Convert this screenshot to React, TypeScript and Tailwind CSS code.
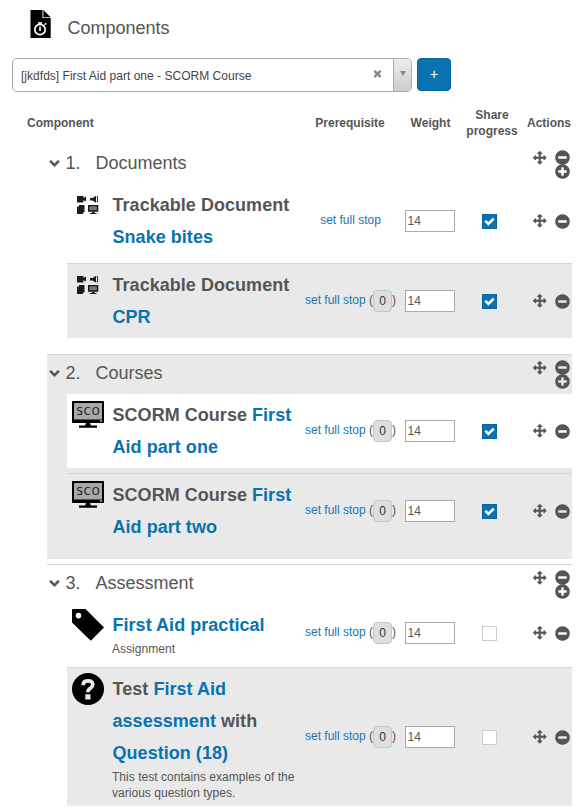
import React from "react";

const CIRCLE =
  "M1664 896q0 209-103 385.5t-279.5 279.5-385.5 103-385.5-103-279.5-279.5-103-385.5 103-385.5 279.5-279.5 385.5-103 385.5 103 279.5 279.5 103 385.5z";
const MINUS =
  "M1344 960v-128q0-26-19-45t-45-19h-768q-26 0-45 19t-19 45v128q0 26 19 45t45 19h768q26 0 45-19t19-45z";
const PLUS =
  "M1344 960v-128q0-26-19-45t-45-19h-256v-256q0-26-19-45t-45-19h-128q-26 0-45 19t-19 45v256h-256q-26 0-45 19t-19 45v128q0 26 19 45t45 19h256v256q0 26 19 45t45 19h128q26 0 45-19t19-45v-256h256q26 0 45-19t19-45z";
const ARROWS =
  "M1792 896q0 26-19 45l-256 256q-19 19-45 19t-45-19-19-45v-128h-384v384h128q26 0 45 19t19 45-19 45l-256 256q-19 19-45 19t-45-19l-256-256q-19-19-19-45t19-45 45-19h128v-384h-384v128q0 26-19 45t-45 19-45-19l-256-256q-19-19-19-45t19-45l256-256q19-19 45-19t45 19 19 45v128h384v-384h-128q-26 0-45-19t-19-45 19-45l256-256q19-19 45-19t45 19l256 256q19 19 19 45t-19 45-45 19h-128v384h384v-128q0-26 19-45t45-19 45 19l256 256q19 19 19 45z";
const CHEVRON =
  "M1683 808l-742 741q-19 19-45 19t-45-19l-742-741q-19-19-19-45.5t19-45.5l166-165q19-19 45-19t45 19l531 531 531-531q19-19 45-19t45 19l166 165q19 19 19 45.5t-19 45.5z";
const TIMES =
  "M1490 1322q0 40-28 68l-136 136q-28 28-68 28t-68-28l-294-294-294 294q-28 28-68 28t-68-28l-136-136q-28-28-28-68t28-68l294-294-294-294q-28-28-28-68t28-68l136-136q28-28 68-28t68 28l294 294 294-294q28-28 68-28t68 28l136 136q28 28 28 68t-28 68l-294 294 294 294q28 28 28 68z";
const CHECK =
  "M1671 566q0 40-28 68l-724 724-136 136q-28 28-68 28t-68-28l-136-136-362-362q-28-28-28-68t28-68l136-136q28-28 68-28t68 28l294 295 656-657q28-28 68-28t68 28l136 136q28 28 28 68z";

function Glyph({ d, className }: { d: string; className: string }) {
  return (
    <svg viewBox="0 0 1792 1792" className={`block shrink-0 overflow-visible fill-current stroke-current ${className}`}>
      <path fillRule="evenodd" d={d} />
    </svg>
  );
}

function MediaIcon() {
  return (
    <svg viewBox="0 0 32 32" className="block size-8">
      <g fill="#1c1c1c">
        <path d="M5 7h6.500v2L14 7.500v5L11.500 11v2.500H5z" />
        <path d="M18 9h2.500L24 6.800v6.900L20.500 11.500H18z" />
        <path d="M24.500 7.500h1v5.500h-1" fill="none" stroke="#1c1c1c" strokeWidth="0.900" />
        <path d="M7 16h5.500v7.500H11V25H5v-7.500h2z" />
        <path d="M16 16h10.300v6.800H16z" />
        <path d="M17.500 17.300h7.300v3.900h-7.300z" fill="#777" />
        <path d="M20 22.800h2.500V24h2v1h-6.500v-1h2z" />
      </g>
    </svg>
  );
}

function ScormIcon() {
  return (
    <svg viewBox="0 0 32 32" className="block size-8">
      <rect x="0" y="2" width="32" height="22" rx="0.800" fill="#000" />
      <rect x="2" y="4" width="28" height="16.500" fill="#a8a8a8" />
      <rect x="28" y="21.500" width="2" height="1" fill="#fff" />
      <path d="M14 24h4l.8 2.500H25v2.200H7v-2.200h6.200z" />
      <text x="16" y="16" textAnchor="middle" fontSize="10" fontFamily="DejaVu Sans" textLength="23" fill="#111">SCO</text>
    </svg>
  );
}

function TagIcon() {
  return (
    <svg viewBox="0 0 32 32" className="block size-8">
      <path fillRule="evenodd" d="M0 .5L.5 0H13.500L32 18.500 18.800 31.800 0 13.500zM6.500 3.800a2.800 2.800 0 100 5.600 2.800 2.800 0 000-5.600z" />
    </svg>
  );
}

function QuestionIcon() {
  return (
    <svg viewBox="0 0 32 32" className="block size-8">
      <circle cx="16" cy="16" r="16" />
      <path d="M11.300 12.300V11.200C11.300 8.500 13 7.800 16 7.800s4.800 1.200 4.800 3.900c0 3.800-5 3.300-5 7.500" fill="none" stroke="#e9e9e9" strokeWidth="3.700" />
      <rect x="13.300" y="21.300" width="5.200" height="5.200" fill="#e9e9e9" />
    </svg>
  );
}

function FileIcon() {
  return (
    <svg viewBox="0 0 21 28" className="block h-7 w-[21px]">
      <path d="M.5 0h12v8h8.200v20H.5z" />
      <path d="M13.400 0L20.700 7.200h-7.300z" />
      <g fill="none" stroke="#fff">
        <circle cx="10" cy="19.500" r="5.200" strokeWidth="1.700" />
        <path d="M8 13h4M10 13v2M10 16.500v4.500M14.600 14.800l1.500-1.500" strokeWidth="1.600" />
      </g>
    </svg>
  );
}

function Link({ children }: { children: React.ReactNode }) {
  return <a className="text-[#0873b0]">{children}</a>;
}

type RowProps = {
  icon: React.ReactNode;
  title: React.ReactNode;
  note?: string;
  stop?: boolean;
  checked?: boolean;
  shade?: string;
};

function Row({ icon, title, note, stop = true, checked = true, shade = "bg-white" }: RowProps) {
  return (
    <div className={`ml-5 flex items-center py-[5px] ${shade}`}>
      <div className="ml-[5px] w-8 self-start">{icon}</div>
      <div className="ml-2 w-[185px] shrink-0">
        <div className="pl-[0.5px] text-[18px] leading-8 font-bold tracking-[0.04px]">{title}</div>
        {note && <div className="text-[12px] leading-4 tracking-[0.03px]">{note}</div>}
      </div>
      <div className="flex w-[107px] shrink-0 items-center justify-center text-[12px] leading-4">
        <span className="mb-0.5 whitespace-pre text-[#1b75b0]">set full stop{stop ? " " : ""}</span>
        {stop && (
          <>
            <span className="mb-0.5">(</span>
            <span className="flex h-[22px] w-[19px] items-center justify-center rounded-[4px] border border-[#c6c6c6] bg-[#dedede] text-[#333]">0</span>
            <span className="mb-0.5">)</span>
          </>
        )}
      </div>
      <div className="ml-px flex h-[22px] w-[50px] shrink-0 items-center border border-[#aaa] bg-white pl-[1.5px] text-[12px]">14</div>
      <div className={`ml-[27px] flex size-[15px] shrink-0 items-center justify-center border ${checked ? "border-[#0a659b] bg-[#0873b0] text-white" : "border-[#ccc] bg-white"}`}>
        {checked && <Glyph d={CHECK} className="size-[11px] stroke-[60]" />}
      </div>
      <Glyph d={ARROWS} className="ml-9 size-[13.5px] stroke-[24]" />
      <Glyph d={CIRCLE + MINUS} className="ml-[7.5px] size-[17px] stroke-0" />
    </div>
  );
}

type SectionProps = { index: number; name: string; className: string; children: React.ReactNode };

function Section({ index, name, className, children }: SectionProps) {
  return (
    <section className={`ml-[47px] w-[525px] border-t ${className}`}>
      <div className="flex h-[39px] items-start">
        <Glyph d={CHEVRON} className="mt-3 ml-[1.5px] size-[11px] stroke-[80]" />
        <h2 className="mt-0.5 ml-[6px] w-[30px] text-[18px] leading-8">{index}.</h2>
        <h2 className="mt-0.5 grow text-[18px] leading-8">{name}</h2>
        <Glyph d={ARROWS} className="mt-[5.5px] size-[13.5px] stroke-[24]" />
        <div className="mt-1 mr-px ml-[7.5px]">
          <Glyph d={CIRCLE + MINUS} className="size-[17px] stroke-0" />
          <Glyph d={CIRCLE + PLUS} className="-mt-[3px] size-[17px] stroke-0" />
        </div>
      </div>
      {children}
    </section>
  );
}

const Divider = () => <div className="mt-[5px] ml-5 h-px bg-[#d5d7d7]" />;

export default function App() {
  return (
    <main className="h-[811px] w-[584px] overflow-hidden bg-white font-['Liberation_Sans',Arial,sans-serif] text-[#555]">
      <header className="flex h-[58px] pt-2.5 pl-[30px]">
        <FileIcon />
        <h1 className="mt-0.5 ml-[16.5px] text-[18px] leading-8">Components</h1>
      </header>
      <div className="flex pl-3 text-[12px]">
        <div className="flex h-[34px] w-[400px] items-center overflow-hidden rounded-[5px] border border-[#aaa] pl-2 text-[#444]">
          <span className="mt-0.5 grow tracking-[0.025px]">[jkdfds] First Aid part one - SCORM Course</span>
          <Glyph d={TIMES} className="mr-[10px] mb-[3px] size-[11px] stroke-[60] text-[#888]" />
          <div className="flex h-full w-[18px] items-center justify-center border-l border-[#aaa] bg-gradient-to-b from-[#eee] to-[#ccc]">
            <svg viewBox="0 0 7 6" className="mb-1 h-[5px] w-[6px] fill-[#888]"><path d="M0 0h7L3.500 6z" /></svg>
          </div>
        </div>
        <button className="ml-[5px] flex h-[33px] w-[34px] items-center justify-center rounded-[4px] border border-[#0a659b] bg-[#0873b0] text-[14px] text-white">+</button>
      </div>
      <div className="flex h-[52px] items-center pt-[10px] pl-[27px] text-center text-[12px] leading-4 font-bold">
        <div className="w-[270px] text-left">Component</div>
        <div className="w-[106px]">Prerequisite</div>
        <div className="w-[55px]">Weight</div>
        <div className="w-[68px]">Share progress</div>
        <div className="w-[46px]">Actions</div>
      </div>
      <Section index={1} name="Documents" className="h-[205px] border-transparent">
        <Row icon={<MediaIcon />} title={<>Trackable Document <Link>Snake bites</Link></>} stop={false} />
        <Divider />
        <Row icon={<MediaIcon />} title={<>Trackable Document <Link>CPR</Link></>} shade="bg-[#e9e9e9]" />
      </Section>
      <Section index={2} name="Courses" className="mt-[5px] h-[205px] border-[#d5d7d7] bg-[#e9e9e9]">
        <Row icon={<ScormIcon />} title={<>SCORM Course <Link>First</Link> <Link>Aid part one</Link></>} />
        <Divider />
        <Row icon={<ScormIcon />} title={<>SCORM Course <Link>First</Link> <Link>Aid part two</Link></>} shade="bg-[#e9e9e9]" />
      </Section>
      <Section index={3} name="Assessment" className="mt-[5px] border-[#d5d7d7]">
        <Row icon={<TagIcon />} title={<Link>First Aid practical</Link>} note="Assignment" checked={false} />
        <Divider />
        <Row
          icon={<QuestionIcon />}
          title={<>Test <Link>First Aid</Link> <Link>assessment</Link> with <Link>Question (18)</Link></>}
          note="This test contains examples of the various question types."
          checked={false}
          shade="bg-[#e9e9e9]"
        />
      </Section>
    </main>
  );
}
